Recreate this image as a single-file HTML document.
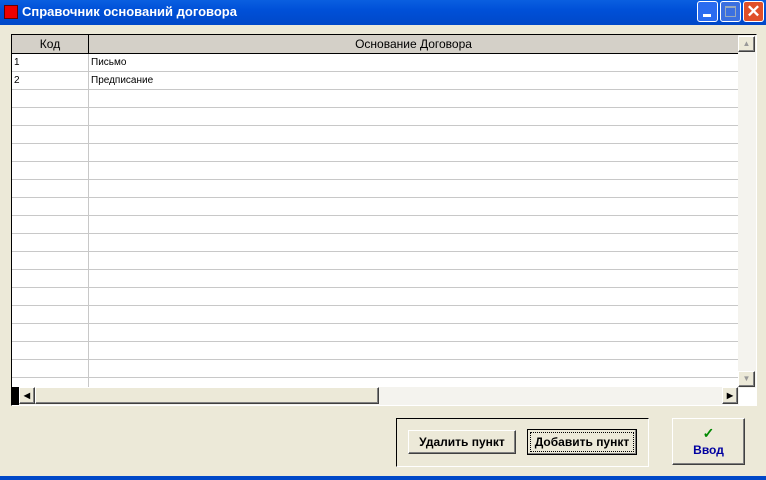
<!DOCTYPE html>
<html><head><meta charset="utf-8"><style>
*{margin:0;padding:0;box-sizing:border-box}
body{width:766px;height:480px;background:#ece9d8;font-family:"Liberation Sans",sans-serif;position:relative;overflow:hidden}
.abs{position:absolute}
.title{left:0;top:0;width:766px;height:25px;background:linear-gradient(#0a5fe0,#0050d8 40%,#0048c8);color:#fff;font-weight:bold;font-size:13px}
.tb{top:1px;width:21px;height:21px;border:1px solid #fff;border-radius:3px;background:#2a6cf0}
.grid{left:11px;top:34px;width:746px;height:372px;border:1px solid #000;border-right-color:#fff;border-bottom-color:#fff;background:#fff;overflow:hidden}
.hdr{top:0;height:19px;background:#d4d0c8;border-bottom:1px solid #000;font-size:12px;text-align:center;line-height:18px;color:#000}
.row{left:0;width:726px;height:18px;border-bottom:1px solid #c8c8c8;font-size:10px;line-height:17px}
.btn{background:#ece9d8;border:1px solid;border-color:#fff #404040 #404040 #fff;box-shadow:inset -1px -1px 0 #808080;font-size:12px;font-weight:bold;text-align:center}
</style></head><body>
<div class="abs title"><div class="abs" style="left:4px;top:5px;width:14px;height:14px;background:#e00;border:1px solid #600"></div><span class="abs" style="left:22px;top:4px">Справочник оснований договора</span>
<div class="abs tb" style="left:697px"><div class="abs" style="left:5px;top:12px;width:8px;height:3px;background:#fff"></div></div>
<div class="abs tb" style="left:720px;background:#3b70e0"><div class="abs" style="left:4px;top:4px;width:11px;height:11px;border:1px solid #9ab;border-top-width:2px"></div></div>
<div class="abs tb" style="left:743px;background:#e0502a;color:#fff;font-size:17px;text-align:center;line-height:19px">✕</div>
</div>
<div class="abs grid">
<div class="abs hdr" style="left:0;width:77px;border-right:1px solid #000">Код</div>
<div class="abs hdr" style="left:77px;width:649px">Основание Договора</div>
<div class="abs" style="left:76px;top:19px;width:1px;height:334px;background:#c8c8c8"></div>
<div class="abs" style="left:0;top:19px;width:726px">
<div class="row" style="position:relative"><span style="padding-left:2px">1</span><span class="abs" style="left:79px">Письмо</span></div>
<div class="row" style="position:relative"><span style="padding-left:2px">2</span><span class="abs" style="left:79px">Предписание</span></div>
<div class="row" style="position:relative"></div><div class="row" style="position:relative"></div><div class="row" style="position:relative"></div><div class="row" style="position:relative"></div><div class="row" style="position:relative"></div><div class="row" style="position:relative"></div><div class="row" style="position:relative"></div><div class="row" style="position:relative"></div><div class="row" style="position:relative"></div><div class="row" style="position:relative"></div><div class="row" style="position:relative"></div><div class="row" style="position:relative"></div><div class="row" style="position:relative"></div><div class="row" style="position:relative"></div><div class="row" style="position:relative"></div><div class="row" style="position:relative"></div>
</div>
<div class="abs" style="left:726px;top:0;width:18px;height:353px;background:#f4f3ee"></div>
<div class="abs btn" style="left:726px;top:1px;width:17px;height:16px;font-size:8px;color:#999;line-height:14px">▲</div>
<div class="abs btn" style="left:726px;top:336px;width:17px;height:16px;font-size:8px;color:#999;line-height:14px">▼</div>
<div class="abs" style="left:0;top:352px;width:7px;height:19px;background:#000"></div>
<div class="abs" style="left:7px;top:352px;width:720px;height:19px;background:#f4f3ee"></div>
<div class="abs btn" style="left:7px;top:352px;width:16px;height:17px;font-size:8px;line-height:15px">◀</div>
<div class="abs btn" style="left:23px;top:352px;width:344px;height:17px"></div>
<div class="abs btn" style="left:710px;top:352px;width:16px;height:17px;font-size:8px;line-height:15px">▶</div>
</div>
<div class="abs" style="left:396px;top:418px;width:253px;height:49px;border:1px solid #000;border-right-color:#fff;border-bottom-color:#fff"></div>
<div class="abs btn" style="left:408px;top:430px;width:108px;height:24px;line-height:22px">Удалить пункт</div>
<div class="abs btn" style="left:527px;top:429px;width:110px;height:26px;border:1px solid #000;line-height:22px"><div style="margin:2px;border:1px dotted #000;line-height:18px">Добавить пункт</div></div>
<div class="abs btn" style="left:672px;top:418px;width:73px;height:47px;color:#0000a0;padding-top:6px;line-height:16px"><span style="color:#080;font-size:14px">✓</span><br>Ввод</div>
<div class="abs" style="left:0;top:476px;width:766px;height:4px;background:#0048c8"></div>
</body></html>
